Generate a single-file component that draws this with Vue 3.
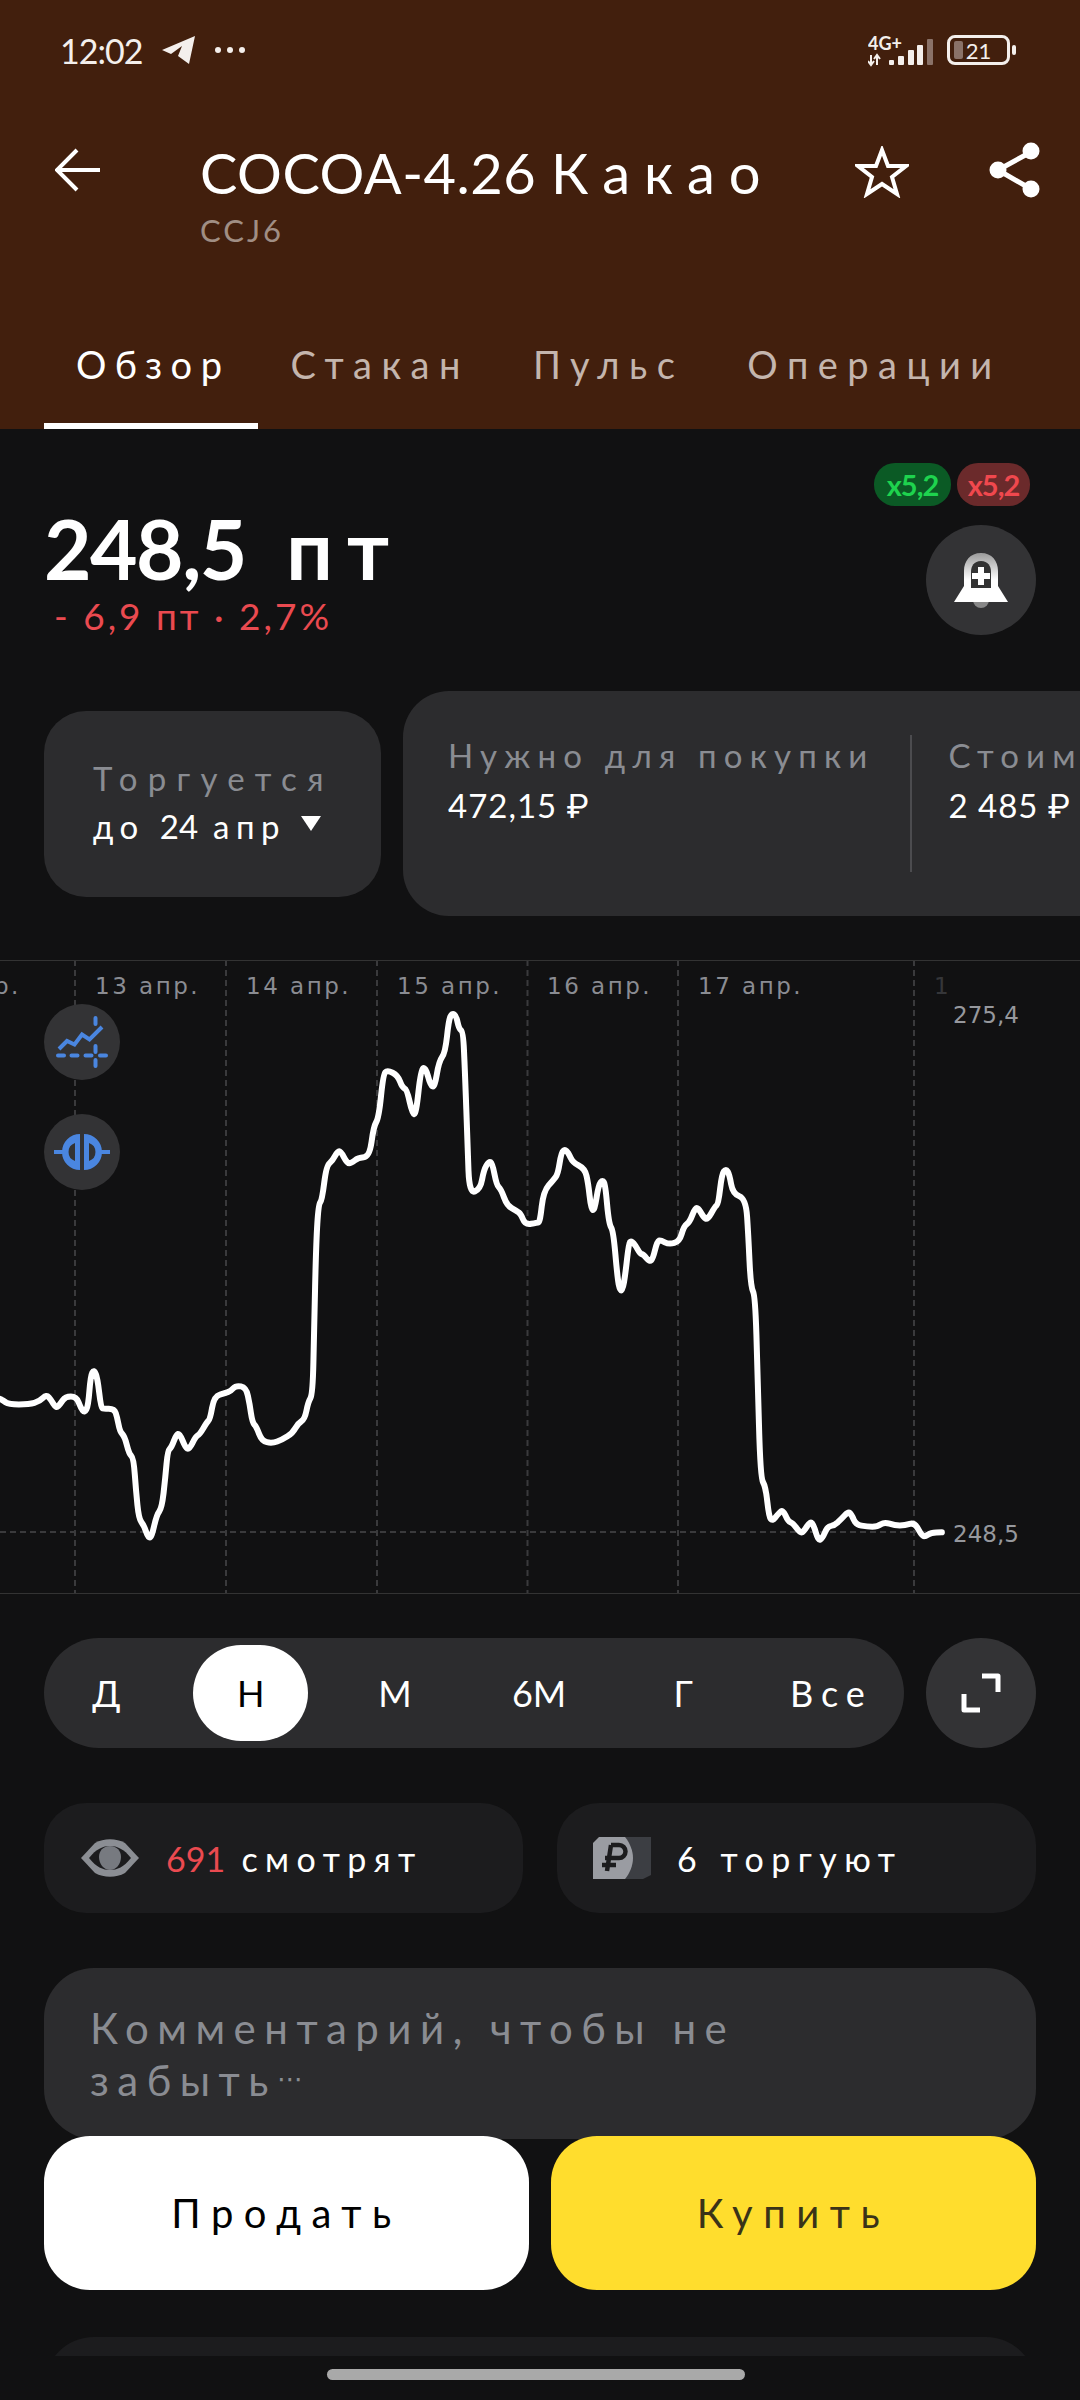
<template>
  <div class="screen">
    <header class="head">
      <div class="status">
        <span class="clock">12:02</span>
        <svg class="plane" width="36" height="30" viewBox="0 0 36 30">
          <path d="M1 15 34 1 28 29 17 21 21 11 10 19Z" fill="#f4efec" />
        </svg>
        <span class="more"><i></i><i></i><i></i></span>
        <svg class="net" width="70" height="39" viewBox="0 -5 70 39">
          <text x="0" y="14" class="net-label">4G+</text>
          <path d="M3 19v9M0 25l3 4 3-4M9 29v-10M6 23l3-4 3 4" stroke="#f4efec" stroke-width="2" fill="none" />
          <rect x="21" y="24" width="5" height="5" rx="1" fill="#f4efec" />
          <rect x="30" y="20" width="6" height="9" rx="1" fill="#f4efec" />
          <rect x="40" y="14" width="6" height="15" rx="1" fill="#f4efec" />
          <rect x="49" y="9" width="6" height="20" rx="1" fill="#f4efec" />
          <rect x="59" y="3" width="6" height="26" rx="1" fill="#8a7268" />
        </svg>
        <div class="battery">
          <i class="battery-level"></i>
          <span>21</span>
        </div>
        <i class="battery-nub"></i>
      </div>

      <div class="toolbar">
        <svg class="back" width="46" height="44" viewBox="0 0 46 44">
          <path d="M45 22H3M22 2 2 22l20 20" fill="none" stroke="#fff" stroke-width="4" />
        </svg>
        <div class="title-box">
          <div class="title">COCOA-4.26 <span>Какао</span></div>
          <div class="ticker">CCJ6</div>
        </div>
        <svg class="star" width="54" height="52" viewBox="0 0 54 52">
          <path d="M27 4 33 20H51L37 31 42 48 27 38 12 48 17 31 3 20H21Z" fill="none" stroke="#fff" stroke-width="4" />
        </svg>
        <svg class="share" width="52" height="56" viewBox="0 0 52 56">
          <path d="M42 10 9 28 42 47" fill="none" stroke="#fff" stroke-width="5" />
          <circle cx="42" cy="9" r="8.5" fill="#fff" />
          <circle cx="9" cy="28" r="8.5" fill="#fff" />
          <circle cx="42" cy="47" r="8.5" fill="#fff" />
        </svg>
      </div>

      <nav class="tabs">
        <a v-for="(tab, i) in tabs" :key="tab" class="tab" :class="{ active: i === 0 }">{{ tab }}</a>
      </nav>
    </header>

    <section class="price-row">
      <div>
        <div class="price">248,5 <span>пт</span></div>
        <div class="change">- 6,9 пт · 2,7%</div>
      </div>
      <div class="price-side">
        <div class="badges">
          <span class="badge green">x5,2</span>
          <span class="badge red">x5,2</span>
        </div>
        <button class="round-btn">
          <svg width="56" height="56" viewBox="0 0 56 56">
            <defs>
              <linearGradient id="bellFill" x1="0" y1="0" x2="0" y2="1">
                <stop offset="0" stop-color="#9a9a9a" />
                <stop offset="0.55" stop-color="#fff" />
              </linearGradient>
            </defs>
            <path d="M20 48a8 8 0 0 0 16 0Z" fill="#888" />
            <path d="M28 1C17 1 11 9 11 19v15L1 50h54L45 34V19C45 9 39 1 28 1Z" fill="url(#bellFill)" />
            <path d="M28 9c-7 0-10 5-10 11v16h20V20c0-6-3-11-10-11Z" fill="#333" />
            <path d="M28 15v18M19 24h18" stroke="#fff" stroke-width="6" />
          </svg>
        </button>
      </div>
    </section>

    <section class="info-row">
      <div class="info-card trading">
        <div class="muted wide">Торгуется</div>
        <div class="value spaced">до <span class="num">24</span> апр <i class="caret"></i></div>
      </div>
      <div class="info-card needs">
        <div class="cell">
          <div class="muted">Нужно для покупки</div>
          <div class="value">472,15 ₽</div>
        </div>
        <i class="divider"></i>
        <div class="cell">
          <div class="muted">Стоимость</div>
          <div class="value">2 485 ₽</div>
        </div>
      </div>
    </section>

    <section class="chart">
      <svg class="plot" width="1080" height="634" viewBox="0 0 1080 634">
        <line v-for="x in gridX" :key="x" :x1="x" :x2="x" y1="0" y2="634" class="grid" />
        <line x1="0" x2="930" y1="572" y2="572" class="grid" />
        <path :d="pricePath" class="line" />
      </svg>
      <span v-for="d in dates" :key="d.x" class="date" :style="{ left: d.x + 'px', opacity: d.o }">{{ d.t }}</span>
      <span class="scale high">275,4</span>
      <span class="scale low">248,5</span>
      <div class="tool first">
        <svg width="76" height="76" viewBox="0 0 76 76">
          <path d="M15 45 23 37 30.500 40.500 38 30.500 45.500 35.500 58 23" fill="none" stroke="#4a86e0" stroke-width="4" />
          <path d="M51.500 14v6M51.500 42v6M51.500 56v6M14 51.500h6M27.500 51.500h6M41.500 51.500h6M56 51.500h6" stroke="#4a86e0" stroke-width="4" stroke-linecap="round" />
        </svg>
      </div>
      <div class="tool second">
        <svg width="76" height="76" viewBox="0 0 76 76">
          <path d="M10 38H22M54 38H66" stroke="#4a86e0" stroke-width="4" />
          <path d="M36 20A18 18 0 0 0 36 56ZM40 20A18 18 0 0 1 40 56Z" fill="#4a86e0" />
          <path d="M31 29A9.500 9.500 0 0 0 31 47ZM45 29A9.500 9.500 0 0 1 45 47Z" fill="#333" />
        </svg>
      </div>
    </section>

    <section class="period-row">
      <div class="periods">
        <span v-for="(p, i) in periods" :key="p" class="period" :class="{ active: i === 1 }">{{ p }}</span>
      </div>
      <button class="round-btn">
        <svg width="40" height="40" viewBox="0 0 40 40">
          <path d="M21 3H37V19M3 21V37H19" fill="none" stroke="#fff" stroke-width="5" stroke-linejoin="round" />
        </svg>
      </button>
    </section>

    <section class="stats-row">
      <div class="stat">
        <svg width="60" height="38" viewBox="0 0 60 38">
          <path d="M1 19 15 4C24-1 36-1 45 4L59 19 45 34C36 39 24 39 15 34Z" fill="#8b8e94" />
          <path d="M9 19C16 10 23 7 30 7S44 10 51 19C44 28 37 31 30 31S16 28 9 19Z" fill="#1c1c1e" />
          <path d="M30 7C37 7 41 12 41 18 41 25 36 31 30 31 24 31 19 25 19 18 19 12 23 7 30 7Z" fill="#777a80" />
        </svg>
        <span class="stat-text"><b>691</b> смотрят</span>
      </div>
      <div class="stat">
        <svg width="58" height="42" viewBox="0 0 58 42">
          <path d="M20 0H58V38L50 42H20Z" fill="#3c3e43" />
          <path d="M6 0H32C37 6 40 14 40 21 40 28 37 36 32 42H0V6Z" fill="#9a9ca2" />
          <path d="M18 8H26A6 6 0 0 1 26 21H12M18 8 14 34M9 28H23" fill="none" stroke="#1c1c1e" stroke-width="4.500" />
        </svg>
        <span class="stat-text">6 торгуют</span>
      </div>
    </section>

    <section class="comment">Комментарий, чтобы не<br />забыть<span class="dots">⋯</span></section>
    <div class="next-card"></div>

    <div class="actions">
      <button class="action sell">Продать</button>
      <button class="action buy">Купить</button>
    </div>
    <div class="nav-bar"><i></i></div>
  </div>
</template>

<script setup>
const tabs = ['Обзор', 'Стакан', 'Пульс', 'Операции']
const periods = ['Д', 'Н', 'М', '6М', 'Г', 'Все']
const gridX = [75, 226, 377, 527.5, 678, 914]
const dates = [
  { x: -6, t: 'р.', o: 1 },
  { x: 95, t: '13 апр.', o: 1 },
  { x: 246, t: '14 апр.', o: 1 },
  { x: 397, t: '15 апр.', o: 1 },
  { x: 547, t: '16 апр.', o: 1 },
  { x: 698, t: '17 апр.', o: 1 },
  { x: 934, t: '1', o: 0.3 }
]

// точки снимал по двум половинам графика
const leftPart = [[0,1058],[10,1062],[25,1071],[85,1071],[115,1064],[135,1048],[148,1060],[163,1080],[175,1070],[190,1053],[222,1053],[235,1080],[246,1090],[256,1075],[263,1005],[273,990],[283,1010],[293,1078],[300,1081],[332,1081],[340,1100],[348,1133],[362,1145],[375,1185],[388,1195],[395,1270],[403,1335],[418,1350],[430,1378],[440,1378],[455,1325],[470,1310],[480,1240],[487,1178],[498,1170],[512,1140],[522,1138],[538,1170],[550,1175],[568,1145],[580,1140],[600,1113],[610,1105],[622,1052],[655,1045],[670,1040],[685,1027],[715,1032],[725,1070],[733,1113],[745,1123],[760,1155],[790,1161],[820,1152],[850,1137],[865,1115],[885,1105],[895,1065],[908,1048],[912,900],[918,700],[925,610],[935,600],[948,520],[965,510],[980,487],[990,487],[1008,515],[1020,515],[1040,502],[1073,500],[1085,430],[1100,410],[1113,310],[1125,300],[1155,312],[1168,340],[1182,345],[1197,400],[1208,403],[1222,300],[1235,292],[1250,335],[1262,340],[1275,280],[1293,260],[1303,185],[1313,168],[1325,175],[1333,205],[1345,212],[1350,300],[1358,480],[1363,585],[1395,575],[1405,530],[1420,510],[1430,515],[1442,565],[1455,575],[1472,612],[1500,625],[1513,632],[1525,657],[1560,652]]
const rightPart = [[0,650],[10,580],[40,552],[52,540],[62,490],[72,483],[82,490],[95,513],[130,527],[140,560],[148,620],[158,625],[170,565],[182,553],[190,565],[200,655],[213,670],[225,780],[232,808],[240,808],[248,770],[258,700],[265,693],[278,705],[290,723],[300,725],[318,742],[328,735],[340,695],[350,692],[375,702],[405,695],[418,660],[435,650],[450,618],[460,618],[475,640],[487,645],[508,615],[518,608],[528,540],[540,527],[550,540],[560,585],[598,597],[605,680],[612,800],[625,820],[632,1000],[640,1240],[655,1260],[665,1330],[675,1340],[690,1325],[705,1313],[720,1340],[735,1345],[755,1367],[765,1365],[785,1340],[795,1350],[808,1385],[820,1380],[835,1352],[855,1350],[875,1335],[895,1318],[905,1325],[917,1348],[950,1353],[980,1353],[1000,1342],[1030,1350],[1060,1350],[1088,1343],[1110,1375],[1120,1375],[1135,1367],[1167,1366]]

const points = [
  ...leftPart.map(([x, y]) => [x / 2.904, y / 2.306 - 20]),
  ...rightPart.map(([x, y]) => [540 + x / 2.904, y / 2.306 - 20])
]

// сглаживание через середины отрезков
const pricePath = points.reduce((d, p, i) => {
  if (i === 0) return `M${p[0]} ${p[1]}`
  const prev = points[i - 1]
  return `${d}Q${prev[0].toFixed(1)} ${prev[1].toFixed(1)} ${((prev[0] + p[0]) / 2).toFixed(1)} ${((prev[1] + p[1]) / 2).toFixed(1)}`
}, '') + `L${points[points.length - 1].join(' ')}`
</script>

<style scoped>
.screen {
  position: relative;
  width: 1080px;
  height: 2400px;
  overflow: hidden;
  background: #111112;
  color: #fff;
  font-family: Lato, Roboto, "Noto Sans", sans-serif;
}
.head {
  height: 429px;
  background: #421f0d;
  overflow: hidden;
}
.status {
  display: flex;
  align-items: center;
  height: 100px;
  padding-left: 60px;
  color: #f4efec;
}
.clock {
  font-size: 34px;
  letter-spacing: -1px;
}
.plane {
  margin-left: 19px;
}
.more {
  display: flex;
  gap: 6px;
  margin-left: 18px;
}
.more i {
  width: 6px;
  height: 6px;
  border-radius: 50%;
  background: #f4efec;
}
.net {
  margin-left: auto;
}
.net-label {
  font-size: 18px;
  font-weight: 700;
  fill: #f4efec;
}
.battery {
  position: relative;
  display: flex;
  align-items: center;
  justify-content: center;
  box-sizing: border-box;
  width: 63px;
  height: 30px;
  margin-left: 9px;
  border: 3px solid #f4efec;
  border-radius: 8px;
  font-size: 22px;
}
.battery-level {
  position: absolute;
  left: 4px;
  top: 3px;
  bottom: 3px;
  width: 9px;
  background: #8a7268;
  border-radius: 2px;
}
.battery-nub {
  width: 4px;
  height: 10px;
  margin: 0 64px 0 2px;
  background: #f4efec;
  border-radius: 2px;
}
.toolbar {
  display: flex;
  align-items: flex-start;
  height: 238px;
  padding-left: 55px;
}
.back {
  margin: 48px 0 0;
}
.title-box {
  width: 609px;
  margin-left: 99px;
  padding-top: 38px;
}
.title {
  font-size: 56px;
  line-height: 70px;
  letter-spacing: 0.5px;
  white-space: nowrap;
}
.title span {
  letter-spacing: 14px;
}
.ticker {
  margin-top: 4px;
  font-size: 31px;
  line-height: 36px;
  letter-spacing: 3px;
  color: #a08e84;
}
.star {
  margin: 46px 0 0 46px;
}
.share {
  margin: 42px 0 0 80px;
}
.tabs {
  display: flex;
  height: 91px;
  padding-left: 44px;
}
.tab {
  box-sizing: border-box;
  height: 91px;
  padding: 4px 31px 0 32px;
  font-size: 38px;
  line-height: 44px;
  letter-spacing: 9.5px;
  color: #c4b5ad;
  white-space: nowrap;
}
.tab.active {
  padding-right: 28px;
  letter-spacing: 8.5px;
  color: #fff;
  border-bottom: 6px solid #fff;
}
.price-row {
  display: flex;
  justify-content: space-between;
  height: 262px;
  padding: 34px 44px 0;
  box-sizing: border-box;
}
.price {
  margin-top: 40px;
  font-size: 82px;
  line-height: 90px;
  font-weight: 700;
  letter-spacing: -1.5px;
}
.price span {
  margin-left: 22px;
  letter-spacing: 14px;
}
.change {
  margin: 0 0 0 10px;
  font-size: 37px;
  line-height: 46px;
  letter-spacing: 3px;
  color: #ea4a50;
}
.price-side {
  display: flex;
  flex-direction: column;
  align-items: flex-end;
}
.badges {
  display: flex;
  gap: 6px;
  margin-right: 6px;
}
.badge {
  display: flex;
  align-items: center;
  justify-content: center;
  height: 43px;
  border-radius: 21px;
  font-size: 29px;
  font-weight: 700;
  letter-spacing: -1px;
}
.badge.green {
  width: 77px;
  background: #0b5a25;
  color: #1ed34e;
}
.badge.red {
  width: 73px;
  background: #6b2a2b;
  color: #f0484e;
}
.round-btn {
  display: flex;
  align-items: center;
  justify-content: center;
  flex: none;
  width: 110px;
  height: 110px;
  padding: 0;
  margin-top: 19px;
  border: 0;
  border-radius: 50%;
  background: #333335;
}
.info-row {
  display: flex;
  align-items: center;
  gap: 22px;
  height: 225px;
  padding-left: 44px;
}
.info-card {
  flex: none;
  background: #2c2c2e;
}
.trading {
  box-sizing: border-box;
  width: 337px;
  height: 186px;
  padding: 45px 0 0 49px;
  border-radius: 42px;
}
.needs {
  display: flex;
  height: 225px;
  padding: 42px 0 0 45px;
  box-sizing: border-box;
  border-radius: 46px;
}
.cell {
  white-space: nowrap;
}
.muted {
  font-size: 33px;
  line-height: 44px;
  letter-spacing: 7.2px;
  color: #8a8c92;
  white-space: nowrap;
}
.muted.wide {
  letter-spacing: 10.3px;
}
.value {
  margin-top: 7px;
  font-size: 33px;
  line-height: 42px;
  letter-spacing: 1px;
  white-space: nowrap;
}
.value.spaced {
  margin-top: 5px;
  letter-spacing: 6.5px;
}
.num {
  letter-spacing: 0;
}
.caret {
  display: inline-block;
  width: 0;
  height: 0;
  margin: 0 0 8px 0;
  border-left: 10px solid transparent;
  border-right: 10px solid transparent;
  border-top: 15px solid #fff;
}
.divider {
  width: 2px;
  height: 137px;
  margin: 2px 36px 0 36px;
  background: #4c4c4f;
}
.chart {
  position: relative;
  box-sizing: border-box;
  height: 634px;
  margin-top: 44px;
}
.plot {
  display: block;
}
.grid {
  stroke: #3a3a3c;
  stroke-width: 2;
  stroke-dasharray: 6 4;
}
.line {
  fill: none;
  stroke: #fff;
  stroke-width: 6;
  stroke-linejoin: round;
  stroke-linecap: round;
}
.chart::before,
.chart::after {
  content: "";
  position: absolute;
  left: 0;
  right: 0;
  height: 1px;
  background: #333;
}
.chart::before {
  top: 0;
}
.chart::after {
  bottom: 0;
}
.date {
  position: absolute;
  top: 11px;
  font-family: "DejaVu Sans", sans-serif;
  font-size: 23px;
  line-height: 30px;
  letter-spacing: 2.5px;
  color: #8a8c92;
  background: #111112;
  white-space: nowrap;
}
.scale {
  position: absolute;
  left: 953px;
  font-family: "DejaVu Sans", sans-serif;
  font-size: 23px;
  line-height: 30px;
  color: #96989d;
}
.high {
  top: 40px;
}
.low {
  top: 559px;
}
.tool {
  position: absolute;
  left: 44px;
  width: 76px;
  height: 76px;
  border-radius: 50%;
  background: #333335;
}
.first {
  top: 44px;
}
.second {
  top: 154px;
}
.period-row {
  display: flex;
  gap: 22px;
  padding: 44px 44px 0;
}
.periods {
  display: flex;
  justify-content: space-between;
  flex: 1;
  height: 110px;
  padding: 7px 19px 7px 5px;
  box-sizing: border-box;
  border-radius: 55px;
  background: #2c2c2e;
}
.period {
  display: flex;
  align-items: center;
  justify-content: center;
  width: 115px;
  height: 96px;
  border-radius: 48px;
  font-size: 36px;
}
.period:last-child {
  letter-spacing: 8px;
  transform: translateX(4px);
}
.period.active {
  background: #fff;
  color: #000;
}
.period-row .round-btn {
  margin-top: 0;
}
.stats-row {
  display: flex;
  gap: 34px;
  padding: 55px 44px 0;
}
.stat {
  display: flex;
  align-items: center;
  gap: 26px;
  flex: 1;
  height: 110px;
  padding-left: 36px;
  border-radius: 42px;
  background: #1c1c1e;
}
.stat-text {
  font-size: 34px;
  letter-spacing: 7.5px;
  white-space: nowrap;
}
.stat-text b {
  font-weight: 400;
  letter-spacing: 0;
  color: #ea4a50;
}
.comment {
  box-sizing: border-box;
  height: 171px;
  margin: 55px 44px 0;
  padding: 35px 0 0 46px;
  border-radius: 50px;
  background: #2c2c2e;
  font-size: 42px;
  line-height: 51px;
  letter-spacing: 8.5px;
  color: #8a8c92;
}
.dots {
  font-family: "DejaVu Sans", sans-serif;
  font-size: 26px;
  letter-spacing: -2px;
  vertical-align: 8px;
}
.next-card {
  height: 160px;
  margin: 198px 44px 0;
  border-radius: 50px;
  background: #1c1c1e;
}
.actions {
  position: absolute;
  left: 44px;
  right: 44px;
  top: 2136px;
  display: flex;
  gap: 22px;
}
.action {
  flex: 1;
  height: 154px;
  padding: 0;
  border: 0;
  border-radius: 46px;
  font-family: inherit;
  font-size: 40px;
  letter-spacing: 10.5px;
}
.sell {
  background: #fff;
  color: #000;
}
.buy {
  background: #ffdd2d;
  color: #3a3318;
}
.nav-bar {
  position: absolute;
  left: 0;
  right: 0;
  bottom: 0;
  height: 44px;
  background: #111112;
}
.nav-bar i {
  display: block;
  width: 418px;
  height: 11px;
  margin: 13px 0 0 327px;
  border-radius: 6px;
  background: #a9a9a9;
}
</style>

<style>
html,
body {
  background: #111112;
}
</style>
